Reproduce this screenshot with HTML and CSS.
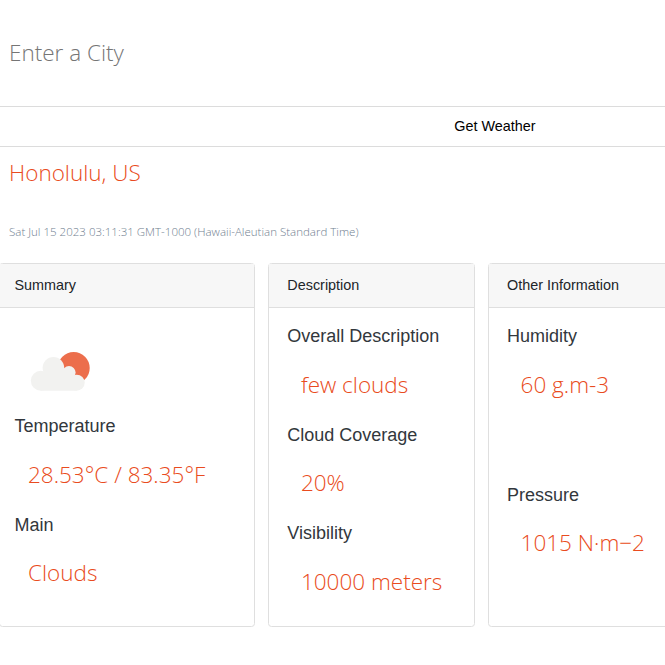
FILE: index.html
```html
<!DOCTYPE html>
<html lang="en">
<head>
<meta charset="utf-8">
<title>Weather</title>
<link rel="stylesheet" href="styles.css">
</head>
<body>
<main class="app">
  <form class="search">
    <input class="city-input" type="text" placeholder="Enter a City">
    <button class="submit" type="button">Get Weather</button>
  </form>
  <h1 class="place">Honolulu, US</h1>
  <p class="date">Sat Jul 15 2023 03:11:31 GMT-1000 (Hawaii-Aleutian Standard Time)</p>
  <section class="cards">
    <article class="card summary">
      <header class="card-header">Summary</header>
      <div class="card-body">
        <svg class="icon" viewBox="0 0 90 90" aria-hidden="true">
          <circle cx="59.7" cy="43" r="16" fill="#ec6e4c"/>
          <g fill="#f2f2f0">
            <circle cx="26.800" cy="55.700" r="10"/>
            <circle cx="39.400" cy="42.800" r="10.800"/>
            <circle cx="55" cy="47.600" r="6.600"/>
            <circle cx="62.700" cy="57.700" r="8"/>
            <path d="M26.800 48L40 40L55 45L62.700 55V65.700H26.800Z"/>
          </g>
        </svg>
        <h5 class="label">Temperature</h5>
        <p class="value">28.53°C / 83.35°F</p>
        <h5 class="label">Main</h5>
        <p class="value">Clouds</p>
      </div>
    </article>
    <article class="card description">
      <header class="card-header">Description</header>
      <div class="card-body">
        <h5 class="label">Overall Description</h5>
        <p class="value">few clouds</p>
        <h5 class="label">Cloud Coverage</h5>
        <p class="value">20%</p>
        <h5 class="label">Visibility</h5>
        <p class="value">10000 meters</p>
      </div>
    </article>
    <article class="card spread">
      <header class="card-header">Other Information</header>
      <div class="card-body">
        <h5 class="label">Humidity</h5>
        <p class="value">60 g.m-3</p>
        <h5 class="label">Pressure</h5>
        <p class="value">1015 N·m−2</p>
      </div>
    </article>
  </section>
</main>
</body>
</html>
```
FILE: styles.css
```css
* { box-sizing: border-box; }
html { overflow: hidden; }
body { margin: 0; background: #fff; color: #212529; font-family: "Liberation Sans", Arial, sans-serif; font-size: 14.4px; line-height: 1.5; overflow: hidden; }
.app { width: 990px; height: 665px; }
.city-input { display: block; width: 100%; height: 106px; padding: 0 9px 2px; border: 0; outline: 0; background: #fff; font-family: "Open Sans", sans-serif; font-size: 22.5px; font-weight: 300; }
.city-input::placeholder { color: #757575; opacity: 1; }
.submit { display: block; width: 100%; height: 41px; padding: 0; border: solid #dcdcdc; border-width: 1px 0; background: #fff; color: #000; font: inherit; }
.place { margin: 9px 0 0 9px; color: #e94b20; font: 300 22.5px/34px "Open Sans", sans-serif; }
.date { margin: 32px 0 0 9px; color: #708090; font: 300 11.52px/20px "Open Sans", sans-serif; }
.cards { display: grid; grid-template-columns: 256px 207px 270px; gap: 13px; margin: 21px 0 0 -1px; height: 364px; }
.card { height: 364px; border: 1px solid #dfdfdf; border-radius: 3.5px; }
.card-header { height: 44px; padding: 11px 18px 0; border-bottom: 1px solid #dfdfdf; background: #f7f7f7; }
.card-body { padding: 17px 18px; }
.summary .card-header, .summary .card-body { padding-left: 14.4px; }
.description .card-header, .description .card-body { padding-left: 18.3px; }
.icon { display: block; width: 90px; height: 90px; }
.label { margin: 0 0 14.75px; color: #32373c; font-size: 18px; font-weight: 400; line-height: 22px; }
.value { margin: 0 0 16.25px 13.6px; color: #e94b20; font: 300 22.5px/45.500px "Open Sans", sans-serif; white-space: nowrap; }
.value:last-child { margin-bottom: 0; }
.spread .value:first-of-type { margin-bottom: 76.25px; }
```
